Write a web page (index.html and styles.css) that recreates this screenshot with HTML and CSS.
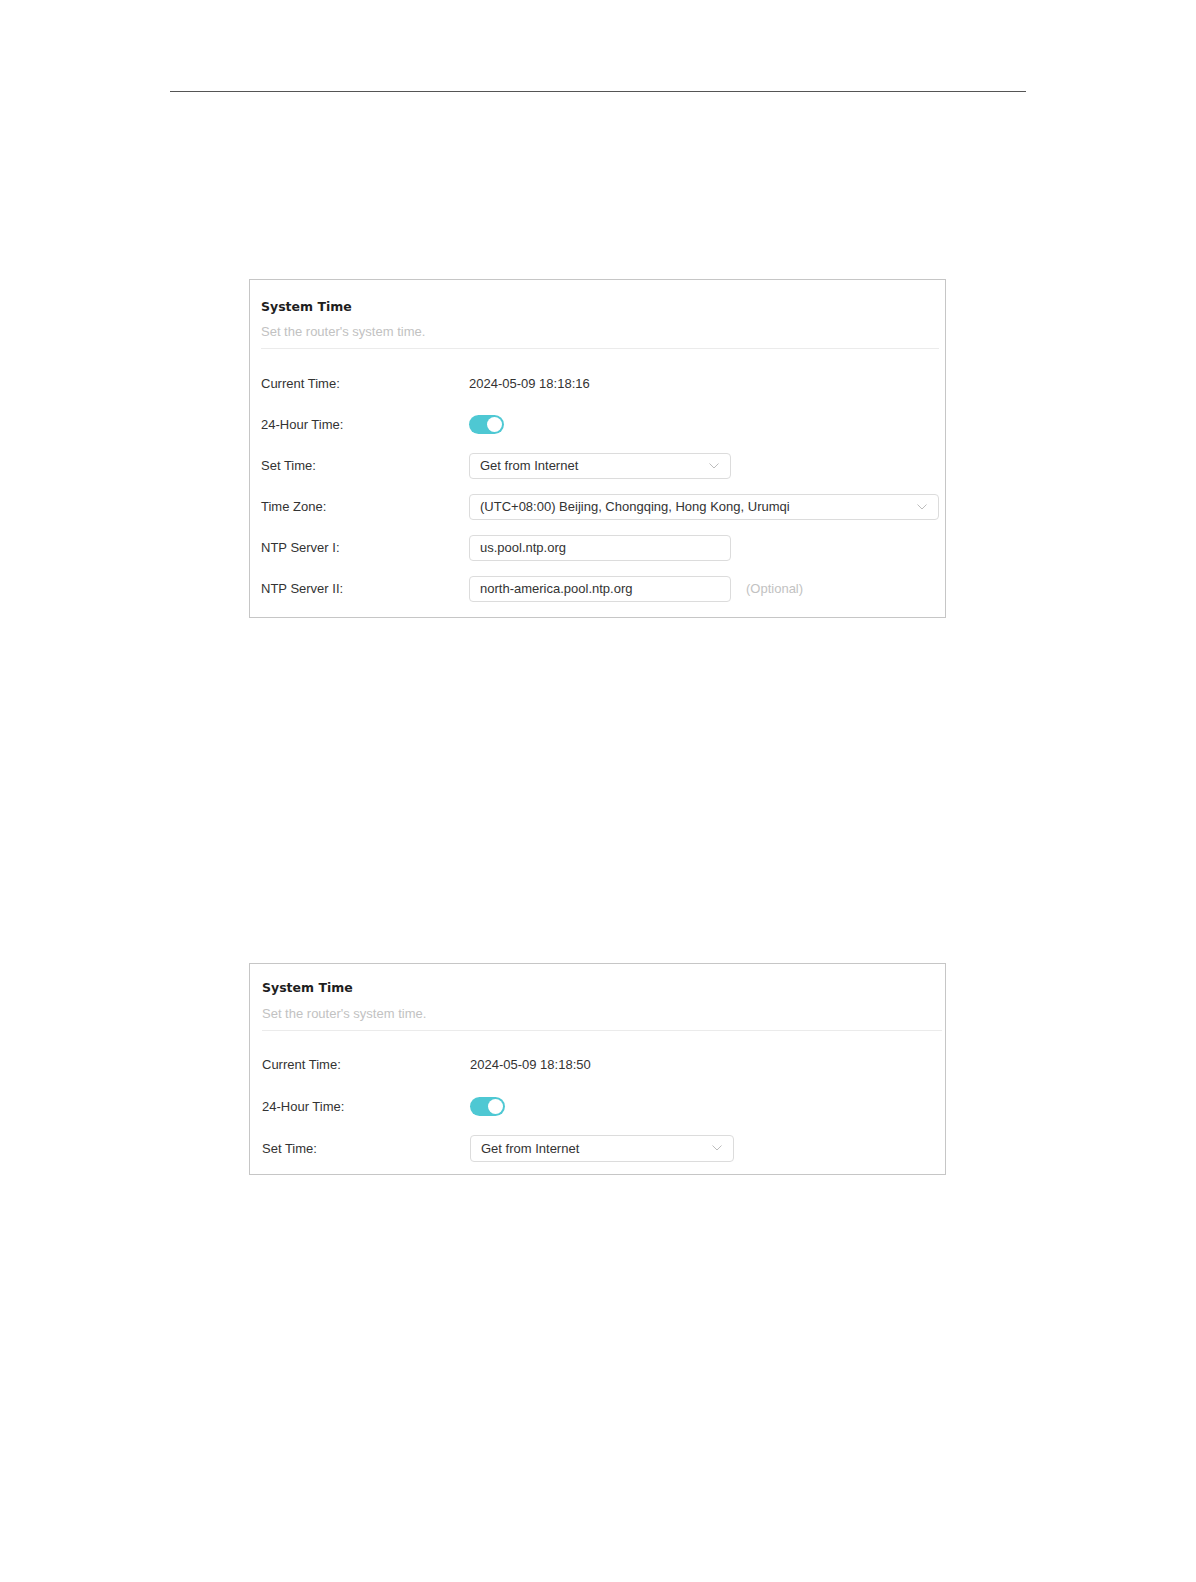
FILE: index.html
```html
<!DOCTYPE html>
<html lang="en">
<head>
	<meta charset="UTF-8">
	<title>System Time</title>
	<link rel="stylesheet" href="styles.css">
</head>
<body>
	<div class="page">
		<div class="rule"></div>

		<div class="card card-full">
			<div class="card-head">
				<div class="card-title">System Time</div>
				<div class="card-sub">Set the router's system time.</div>
			</div>
			<div class="rows">
				<div class="row">
					<span class="label">Current Time:</span>
					<span class="value">2024-05-09 18:18:16</span>
				</div>
				<div class="row">
					<span class="label">24-Hour Time:</span>
					<span class="toggle"><span class="knob"></span></span>
				</div>
				<div class="row">
					<span class="label">Set Time:</span>
					<div class="select">
						<span>Get from Internet</span>
						<svg class="chev" width="10" height="6" viewBox="0 0 10 6"><polyline points="0.5,0.5 5,5 9.5,0.5" fill="none" stroke="#bdbdbd" stroke-width="1"/></svg>
					</div>
				</div>
				<div class="row">
					<span class="label">Time Zone:</span>
					<div class="select select-wide">
						<span>(UTC+08:00) Beijing, Chongqing, Hong Kong, Urumqi</span>
						<svg class="chev" width="10" height="6" viewBox="0 0 10 6"><polyline points="0.5,0.5 5,5 9.5,0.5" fill="none" stroke="#bdbdbd" stroke-width="1"/></svg>
					</div>
				</div>
				<div class="row">
					<span class="label">NTP Server I:</span>
					<div class="input">us.pool.ntp.org</div>
				</div>
				<div class="row">
					<span class="label">NTP Server II:</span>
					<div class="field">
						<div class="input">north-america.pool.ntp.org</div>
						<span class="hint">(Optional)</span>
					</div>
				</div>
			</div>
		</div>

		<div class="card card-short">
			<div class="card-head">
				<div class="card-title">System Time</div>
				<div class="card-sub">Set the router's system time.</div>
			</div>
			<div class="rows">
				<div class="row">
					<span class="label">Current Time:</span>
					<span class="value">2024-05-09 18:18:50</span>
				</div>
				<div class="row">
					<span class="label">24-Hour Time:</span>
					<span class="toggle"><span class="knob"></span></span>
				</div>
				<div class="row">
					<span class="label">Set Time:</span>
					<div class="select">
						<span>Get from Internet</span>
						<svg class="chev" width="10" height="6" viewBox="0 0 10 6"><polyline points="0.5,0.5 5,5 9.5,0.5" fill="none" stroke="#bdbdbd" stroke-width="1"/></svg>
					</div>
				</div>
			</div>
		</div>
	</div>
</body>
</html>
```

FILE: styles.css
```css
html,body{margin: 0;padding: 0;background: #fff;}
body{font-family: "Liberation Sans", Arial, sans-serif;font-size: 13px;color: #333;}
.page{width: 1196px;padding-top: 91px;}
.rule{margin-left: 170px;width: 856px;border-top: 1px solid #555;}

.card{width: 695px;border: 1px solid #c6c6c6;margin-left: 249px;background: #fff;}
.card-head{margin-left: 11px;margin-right: 6px;border-bottom: 1px solid #ebebeb;padding-bottom: 7px;}
.card-title{font-family: "DejaVu Sans", Verdana, sans-serif;font-weight: bold;font-size: 12.5px;line-height: 18px;color: #1e1e1e;}
.card-sub{line-height: 18px;color: #c2c2c2;margin-top: 7px;}

.rows{padding-left: 11px;}
.row{display: grid;grid-template-columns: 208px auto;align-items: center;height: 41px;}
.label{color: #333;}
.value{color: #333;}

.toggle{display: flex;justify-content: flex-end;align-items: center;width: 35px;height: 19px;border-radius: 10px;background: #4ec8d3;padding: 0 2px;box-sizing: border-box;}
.knob{width: 15px;height: 15px;border-radius: 50%;background: #fff;}

.select,.input{display: flex;align-items: center;justify-content: space-between;box-sizing: border-box;width: 262px;height: 26px;border: 1px solid #dcdcdc;border-radius: 4px;padding: 0 11px 0 10px;color: #333;}
.select-wide{width: 470px;}
.chev{flex: none;}
.field{display: flex;align-items: center;gap: 15px;}
.hint{color: #c2c2c2;}

.card-full{margin-top: 187px;padding-top: 18px;padding-bottom: 8px;}
.card-full .rows{margin-top: 14px;}

.card-short{margin-top: 345px;padding-top: 15px;padding-bottom: 5px;}
.card-short .card-head{margin-left: 12px;margin-right: 3px;}
.card-short .card-sub{margin-top: 8px;}
.card-short .rows{margin-top: 12px;padding-left: 12px;}
.card-short .row{height: 42px;grid-template-columns: 208px auto;}
.card-short .select{width: 264px;height: 27px;}
```
